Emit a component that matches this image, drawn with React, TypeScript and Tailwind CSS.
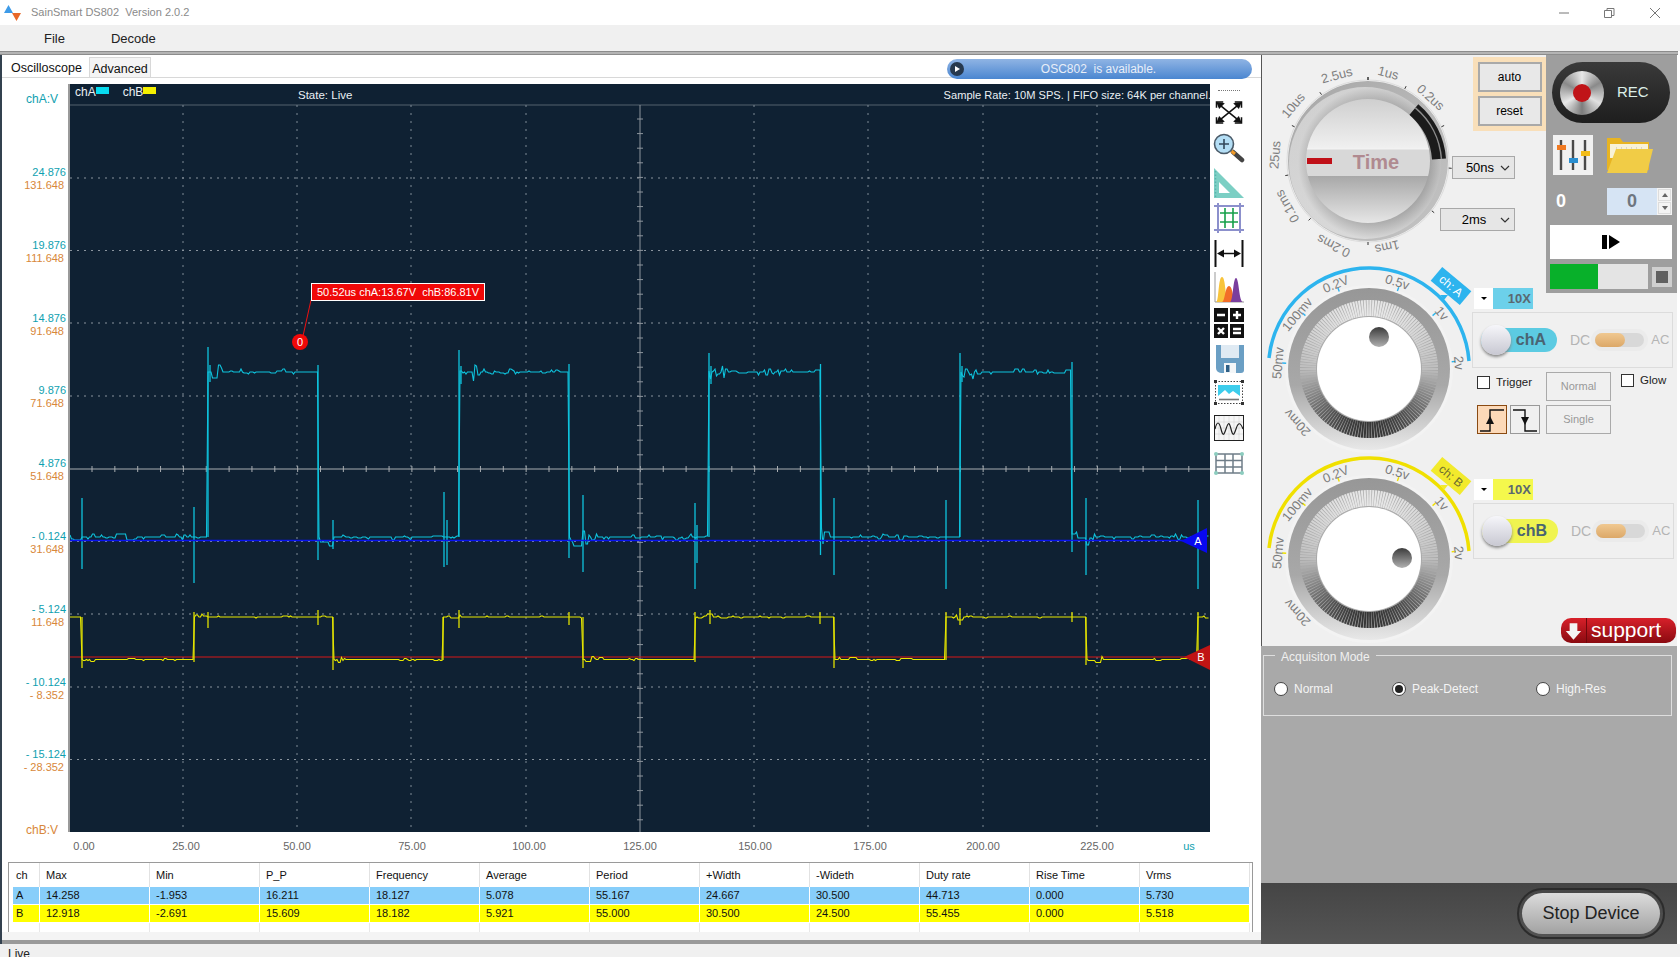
import React from "react";

// --- waveform data -------------------------------------------------------
function rng(seed: number) {
  let s = seed;
  return () => {
    s = (s * 16807) % 2147483647;
    return s / 2147483647;
  };
}

const GRID_X = [183, 297, 411, 526, 754, 868, 983, 1097];
const GRID_Y = [178, 250.5, 323, 396, 541.5, 614, 687, 759.5];

function levelPath(rises: number[], falls: number[], lo: number, hi: number, seed: number, amp: number, busy: number) {
  const r = rng(seed);
  const startHigh = Math.min(...falls) < Math.min(...rises);
  const isHigh = (x: number) => {
    const rise = Math.max(-1, ...rises.filter((e) => e <= x));
    const fall = Math.max(-1, ...falls.filter((e) => e <= x));
    if (rise < 0 && fall < 0) return startHigh;
    return rise > fall;
  };
  const edges = [...rises, ...falls];
  let d = "";
  let last = 0;
  for (let x = 70; x <= 1209; x += 1.5) {
    const base = isHigh(x) ? hi : lo;
    const near = edges.some((e) => x > e && x - e < 18);
    const p = near ? 0.8 : busy;
    if (r() < 0.5) last = r() < p ? Math.round((r() - 0.5) * (near ? amp * 3 : amp)) : 0;
    d += `${d ? "L" : "M"}${x.toFixed(1)} ${(base + last).toFixed(1)} `;
  }
  return d;
}

const A_RISE = [208, 459, 709, 960];
const A_FALL = [318, 569, 820.5, 1072];
const A_SPIKES = [
  [82, 498, 569], [194, 507, 583], [208, 347, 537], [318, 365, 560], [333, 520, 549], [444, 492, 567], [447, 520, 565],
  [459, 350, 537], [569, 364, 558], [583, 495, 572], [695, 503, 589], [697, 525, 563], [709, 353, 537], [820.5, 364, 555],
  [834, 498, 575], [946, 500, 589], [960, 353, 537], [1072, 362, 552], [1086, 498, 575], [1198, 500, 589],
  [210, 365, 382], [461, 366, 384], [711, 366, 384], [962, 366, 382],
];
const B_RISE = [194, 443, 695, 946, 1198];
const B_FALL = [82, 333, 583, 834, 1086];
const B_SPIKES = [
  [82, 617, 668], [194, 612, 662], [208, 612, 628], [318, 610, 625], [333, 617, 670], [443, 617, 660], [459, 610, 628],
  [569, 612, 625], [583, 617, 668], [695, 612, 662], [710, 610, 624], [820, 612, 624], [834, 617, 668], [946, 612, 660],
  [960, 608, 625], [1072, 612, 622], [1086, 617, 665], [1198, 612, 660],
];

const WAVE_A = levelPath(A_RISE, A_FALL, 537, 372, 77, 6, 0.5);
const WAVE_B = levelPath(B_RISE, B_FALL, 659.5, 617, 91, 2, 0.3);

function PlotLines() {
  const hTicks: number[] = [];
  for (let x = 92; x < 1209; x += 22.85) hTicks.push(x);
  const vTicks: number[] = [];
  for (let y = 119; y < 832; y += 14.6) vTicks.push(y);
  return (
    <svg viewBox="70 84 1140 748" className="block h-full w-full">
      <line x1="70" x2="1210" y1="105" y2="105" stroke="#55626f" strokeWidth="1" />
      {GRID_X.map((x) => (
        <line key={x} x1={x} x2={x} y1="105" y2="832" stroke="#7f8b96" strokeWidth="1" strokeDasharray="2 6" />
      ))}
      {GRID_Y.map((y) => (
        <line key={y} x1="70" x2="1210" y1={y} y2={y} stroke="#8a949e" strokeWidth="1" strokeDasharray="2 5" />
      ))}
      <line x1="70" x2="1210" y1="469" y2="469" stroke="#a9aeb2" strokeWidth="1" />
      {hTicks.map((x) => (
        <line key={x} x1={x} x2={x} y1="466" y2="472" stroke="#a9aeb2" strokeWidth="1" />
      ))}
      <line x1="640" x2="640" y1="105" y2="832" stroke="#8d959d" strokeWidth="1" />
      {vTicks.map((y) => (
        <line key={y} x1="637" x2="643" y1={y} y2={y} stroke="#8d959d" strokeWidth="1" />
      ))}
      <path d={WAVE_A} fill="none" stroke="#0ec4de" strokeWidth="1.1" />
      {A_SPIKES.map(([x, a, b]) => (
        <line key={`${x}-${a}`} x1={x} x2={x} y1={a} y2={b} stroke="#0ec4de" strokeWidth="1.3" />
      ))}
      <line x1="70" x2="1200" y1="540.5" y2="540.5" stroke="#0a14f0" strokeWidth="1.6" />
      <line x1="70" x2="1200" y1="657" y2="657" stroke="#d81818" strokeWidth="1" />
      <path d={WAVE_B} fill="none" stroke="#e8e800" strokeWidth="1.1" />
      {B_SPIKES.map(([x, a, b]) => (
        <line key={`${x}-${a}`} x1={x} x2={x} y1={a} y2={b} stroke="#e0e000" strokeWidth="1.3" />
      ))}
      <polygon points="1181,541 1207,528 1207,553" fill="#0808f0" />
      <text x="1198" y="545" fill="#fff" fontSize="11" fontFamily="Liberation Sans" textAnchor="middle">A</text>
      <polygon points="1184,657 1210,645 1210,670" fill="#c01414" />
      <text x="1201" y="661" fill="#fff" fontSize="11" fontFamily="Liberation Sans" textAnchor="middle">B</text>
      <line x1="311" x2="303" y1="300" y2="336" stroke="#f01010" strokeWidth="1" />
      <circle cx="300" cy="342" r="8" fill="#f00808" />
      <text x="300" y="346" fill="#fff" fontSize="11" fontFamily="Liberation Sans" textAnchor="middle">0</text>
    </svg>
  );
}

// --- toolbar icons -------------------------------------------------------
function IconFit() {
  return (
    <svg viewBox="0 0 30 26" className="mt-[9px] h-[25px] w-[30px]" fill="none" stroke="#111" strokeWidth="1.6">
      <path d="M2 8V2h7M21 2h7v6M2 18v6h7M21 24h7v-6" />
      <path d="M4 4l22 18M26 4L4 22" />
      <path d="M3 3l6 1-4 4zM27 3l-6 1 4 4zM3 23l6-1-4-4zM27 23l-6-1 4-4z" fill="#111" />
    </svg>
  );
}
function IconZoom() {
  return (
    <svg viewBox="0 0 32 30" className="mt-[8px] h-[30px] w-[32px]">
      <line x1="20" y1="19" x2="29" y2="27" stroke="#444" strokeWidth="4.5" strokeLinecap="round" />
      <line x1="18.5" y1="18" x2="22" y2="21" stroke="#f09a28" strokeWidth="3" />
      <circle cx="11" cy="11" r="9.5" fill="#b4def5" stroke="#4a5a68" strokeWidth="1.6" />
      <path d="M11 6v10M6 11h10" stroke="#33475a" strokeWidth="1.6" />
    </svg>
  );
}
function IconRuler() {
  return (
    <svg viewBox="0 0 30 30" className="mt-[5px] h-[30px] w-[30px]">
      <path fillRule="evenodd" d="M0 0L30 30H0zM5 14v11h11z" fill="#7ccfc4" />
      <path d="M1.5 3v26" stroke="#5ab3ad" strokeWidth="1.5" strokeDasharray="1.5 2" />
    </svg>
  );
}
function IconGrid() {
  return (
    <svg viewBox="0 0 30 30" className="mt-[5px] h-[30px] w-[30px]" fill="none">
      <path d="M4 0v30M26 0v30M0 3h30M0 27h30" stroke="#8c90cc" strokeWidth="2" />
      <path d="M6 10h18M6 19h18M11 5v20M19 5v20" stroke="#16a04a" strokeWidth="1.6" />
    </svg>
  );
}
function IconWidth() {
  return (
    <svg viewBox="0 0 30 27" className="mt-[7px] h-[27px] w-[30px]">
      <path d="M1.5 0v27M28.5 0v27" stroke="#111" strokeWidth="2" />
      <path d="M8 13.5h14" stroke="#111" strokeWidth="1.5" />
      <path d="M3 13.5l7-4v8zM27 13.5l-7-4v8z" fill="#111" />
    </svg>
  );
}
function IconPeaks() {
  return (
    <svg viewBox="0 0 30 31" className="mt-[5px] h-[31px] w-[30px]">
      <path d="M1 0v30h29" stroke="#999" strokeWidth="1" fill="none" />
      <path d="M2 30C5 30 4 5 8 5s3 25 7 25z" fill="#f8c43c" />
      <path d="M8 30c3 0 3-16 7-16s4 16 7 16z" fill="#f26d28" />
      <path d="M16 30c3 0 3-24 6-24s3 24 7 24z" fill="#7a3e9e" />
    </svg>
  );
}
function IconCalc() {
  return (
    <svg viewBox="0 0 30 30" className="mt-[5px] h-[30px] w-[30px]">
      <rect width="14" height="14" fill="#111" />
      <rect x="16" width="14" height="14" fill="#111" />
      <rect y="16" width="14" height="14" fill="#111" />
      <rect x="16" y="16" width="14" height="14" fill="#111" />
      <path d="M3 7h8M19 7h8M23 3v8M4 20l6 6M10 20l-6 6M19 21h8M19 25h8" stroke="#fff" strokeWidth="2.4" />
    </svg>
  );
}
function IconSave() {
  return (
    <svg viewBox="0 0 28 28" className="ml-[2px] mt-[7px] h-[28px] w-[28px]">
      <path d="M0 0h28v25a3 3 0 0 1-3 3H5a5 5 0 0 1-5-5z" fill="#6b9fc4" />
      <rect x="5" y="0" width="18" height="13" fill="#dfeaf3" />
      <rect x="8" y="18" width="12" height="10" fill="#f3f6f8" />
      <rect x="10" y="20" width="3.5" height="7" fill="#2e5f86" />
    </svg>
  );
}
function IconImage() {
  return (
    <svg viewBox="0 0 30 25" className="mt-[7px] h-[25px] w-[30px]">
      <rect x="1.5" y="1.5" width="27" height="22" fill="none" stroke="#444" strokeDasharray="1.5 1.5" />
      <rect x="0" y="0" width="3" height="3" fill="#333" />
      <rect x="27" y="0" width="3" height="3" fill="#333" />
      <rect x="0" y="22" width="3" height="3" fill="#333" />
      <rect x="27" y="22" width="3" height="3" fill="#333" />
      <path d="M4 5h22v11H4z" fill="#3dcdec" />
      <path d="M4 16l7-6 4 4 4-3 7 5z" fill="#fff" />
      <path d="M5 19.5h20" stroke="#777" strokeWidth="1.6" />
    </svg>
  );
}
function IconWave() {
  return (
    <svg viewBox="0 0 30 26" className="mt-[10px] h-[26px] w-[30px]">
      <rect x="0.5" y="0.5" width="29" height="25" fill="#f6f6f6" stroke="#222" />
      <path d="M5 1v24M10 1v24M15 1v24M20 1v24M25 1v24M1 7h28M1 13h28M1 19h28" stroke="#ccc" strokeWidth="0.5" />
      <path d="M1 14c2-8 4-8 6 0s3 6 5 0 3-8 5 0 3 6 5 0 4-8 7 0" stroke="#222" strokeWidth="1.2" fill="none" />
    </svg>
  );
}
function IconTable() {
  return (
    <svg viewBox="0 0 30 23" className="mt-[11px] h-[23px] w-[30px]" fill="none">
      <path d="M2 2h26v19H2zM2 8.5h26M2 15h26M11 2v19M19 2v19" stroke="#6f7d88" strokeWidth="1.5" />
      <g fill="#8ccdbf">
        <circle cx="2" cy="2" r="2" />
        <circle cx="28" cy="2" r="2" />
        <circle cx="2" cy="21" r="2" />
        <circle cx="28" cy="21" r="2" />
      </g>
    </svg>
  );
}

// --- dials ---------------------------------------------------------------
function TimeDial() {
  const labels: [string, number, number, number][] = [
    ["2.5us", -31, -85, -15], ["1us", 20, -87, 15], ["0.2us", 62, -63, 42], ["10us", -74, -55, -50],
    ["25us", -92, -6, -85], ["0.1ms", -80, 45, -120], ["0.2ms", -34, 84, 207], ["1ms", 19, 85, 167],
  ];
  const ticks = [-90, -63, -25, 5, 38, 90, 135, 170, 205, 235, 270];
  return (
    <svg viewBox="0 0 177 209" className="h-[209px] w-[177px] overflow-visible">
      <defs>
        <linearGradient id="tOuter" x1="0.1" y1="0" x2="0.9" y2="1">
          <stop offset="0" stopColor="#a8a8a8" />
          <stop offset="0.5" stopColor="#b8b8b8" />
          <stop offset="1" stopColor="#c2c2c2" />
        </linearGradient>
        <linearGradient id="tTop" x1="0" y1="0" x2="0" y2="1">
          <stop offset="0" stopColor="#cfcfcf" />
          <stop offset="1" stopColor="#f0f0f0" />
        </linearGradient>
        <linearGradient id="tBot" x1="0" y1="0" x2="0" y2="1">
          <stop offset="0" stopColor="#a8a8a8" />
          <stop offset="1" stopColor="#e6e6e6" />
        </linearGradient>
        <radialGradient id="tShade" cx="0.56" cy="0.5" r="0.5">
          <stop offset="0.72" stopColor="#8a8a8a" />
          <stop offset="1" stopColor="#efefef" />
        </radialGradient>
        <clipPath id="tKnob">
          <circle cx="106" cy="106" r="62" />
        </clipPath>
      </defs>
      <circle cx="106" cy="106" r="81" fill="#f4f4f4" stroke="#dcdcdc" />
      <circle cx="106" cy="106" r="80" fill="url(#tOuter)" />
      <circle cx="103" cy="108" r="76" fill="url(#tShade)" opacity="0.55" />
      <path d="M151.8 54.6A71 71 0 0 1 177 104" fill="none" stroke="#1b1b1b" strokeWidth="14" />
      <path d="M153.4 52.9A73.5 73.5 0 0 1 179.4 104" fill="none" stroke="#8c8c8c" strokeWidth="1.5" />
      <g clipPath="url(#tKnob)">
        <rect x="44" y="44" width="124" height="49" fill="url(#tTop)" />
        <rect x="44" y="93" width="124" height="28" fill="#d8d8d8" />
        <rect x="44" y="93" width="124" height="1.5" fill="#f2f2f2" />
        <rect x="44" y="121" width="124" height="47" fill="url(#tBot)" />
      </g>
      <rect x="45" y="103" width="25" height="6" fill="#c01018" />
      <text x="114" y="114" fontSize="20" fontWeight="700" fill="#b08a90" textAnchor="middle" fontFamily="Liberation Sans">Time</text>
      {ticks.map((a) => {
        const r = (a * Math.PI) / 180;
        return (
          <line key={a} x1={106 + 81 * Math.cos(r)} y1={106 + 81 * Math.sin(r)} x2={106 + 84 * Math.cos(r)} y2={106 + 84 * Math.sin(r)} stroke="#333" strokeWidth="1" />
        );
      })}
      {labels.map(([t, x, y, rot]) => (
        <text key={t} x="0" y="0" transform={`translate(${106 + x} ${106 + y}) rotate(${rot})`} fontSize="13" fill="#7f7f7f" textAnchor="middle" dominantBaseline="middle" fontFamily="Liberation Sans">
          {t}
        </text>
      ))}
    </svg>
  );
}

function VoltDial({ id, color, tag, tagText, dotX, dotY }: { id: string; color: string; tag: string; tagText: string; dotX: number; dotY: number }) {
  const cx = 107;
  const cy = 105;
  const labels: [string, number, number, number][] = [
    ["50mv", -90, -6, -85], ["100mv", -71, -54, -50], ["0.2V", -33, -84, -22], ["0.5v", 28, -86, 17],
    ["1v", 72, -55, 50], ["2v", 89, -6, 85], ["20mv", -71, 53, -133],
  ];
  const ribs = Array.from({ length: 150 }, (_, i) => {
    const a = (i / 150) * Math.PI * 2;
    const s = Math.sin(a); // +1 at the bottom
    const v = s > 0 ? Math.round(190 - 135 * s) : Math.round(190 + 40 * -s);
    return { a, c: `rgb(${v},${v},${v})` };
  });
  return (
    <svg viewBox="0 0 210 190" className="h-[190px] w-[210px] overflow-visible">
      <defs>
        <linearGradient id={`${id}ring`} x1="0" y1="0" x2="0" y2="1">
          <stop offset="0" stopColor="#979797" />
          <stop offset="0.6" stopColor="#a8a8a8" />
          <stop offset="1" stopColor="#e8e8e8" />
        </linearGradient>
        <linearGradient id={`${id}dot`} x1="0" y1="0" x2="0" y2="1">
          <stop offset="0" stopColor="#3c3c3c" />
          <stop offset="1" stopColor="#b0b0b0" />
        </linearGradient>
      </defs>
      <path d={`M${cx - 100} ${cy - 11}A100.4 100.4 0 0 1 ${cx + 100} ${cy - 8}`} fill="none" stroke={color} strokeWidth="3.5" />
      <circle cx={cx} cy={cy} r="84" fill="#f3f3f3" />
      <circle cx={cx} cy={cy} r="81" fill={`url(#${id}ring)`} />
      <circle cx={cx} cy={cy} r="69" fill="#aaa" />
      {ribs.map((r, i) => (
        <line key={i} x1={cx + 53 * Math.cos(r.a)} y1={cy + 53 * Math.sin(r.a)} x2={cx + 69 * Math.cos(r.a)} y2={cy + 69 * Math.sin(r.a)} stroke={r.c} strokeWidth="2" />
      ))}
      <circle cx={cx} cy={cy} r="52" fill="#fff" />
      <circle cx={dotX} cy={dotY} r="10" fill={`url(#${id}dot)`} />
      {[-176, -140, -111, -70, -40, -5].map((a) => {
        const r = (a * Math.PI) / 180;
        return (
          <line key={a} x1={cx + 83 * Math.cos(r)} y1={cy + 83 * Math.sin(r)} x2={cx + 87 * Math.cos(r)} y2={cy + 87 * Math.sin(r)} stroke={color} strokeWidth="1.4" />
        );
      })}
      {labels.map(([t, x, y, rot]) => (
        <text key={t} transform={`translate(${cx + x} ${cy + y}) rotate(${rot})`} fontSize="13" fill="#7d7d7d" textAnchor="middle" dominantBaseline="middle" fontFamily="Liberation Sans">
          {t}
        </text>
      ))}
      <g transform={`translate(189 22) rotate(40)`}>
        <rect x="-19" y="-9" width="38" height="18" fill={tag} />
        <text x="0" y="4" fontSize="12" fill={tagText} textAnchor="middle" fontFamily="Liberation Sans">{id === "a" ? "ch: A" : "ch: B"}</text>
      </g>
      <polygon points="178,31 186,31 182,36" fill={tag} />
    </svg>
  );
}

// --- small controls ------------------------------------------------------
function DropValue({ value, width }: { value: string; width: string }) {
  return (
    <div className={`flex h-[23px] items-center justify-between border border-[#a8a8a8] bg-[#e6e6e6] pl-[7px] pr-[4px] text-[13px] text-black ${width}`}>
      <span className="mx-auto">{value}</span>
      <svg viewBox="0 0 10 6" className="h-[6px] w-[10px]" fill="none" stroke="#333" strokeWidth="1.2">
        <path d="M1 1l4 4 4-4" />
      </svg>
    </div>
  );
}

function ProbeSelect({ bg }: { bg: string }) {
  return (
    <div className="ml-[2px] flex h-[21px] w-[59px] text-[13px] font-bold text-[#5a6870]">
      <div className="flex w-[19px] items-center justify-center bg-white">
        <span className="border-x-[3px] border-t-[3px] border-x-transparent border-t-black" />
      </div>
      <div className={`flex w-[40px] items-center justify-end pr-[2px] ${bg}`}>10X</div>
    </div>
  );
}

function ChannelBox({ name, pill, indent }: { name: string; pill: string; indent: string }) {
  return (
    <div className={`flex h-[56px] w-[201px] items-center border border-[#dcdcdc] ${indent}`}>
      <div className={`relative ml-[8px] flex h-[24px] w-[76px] items-center justify-end rounded-full pr-[11px] text-[16px] font-bold text-[#4a6472] ${pill}`}>
        {name}
        <span className="absolute left-0 top-[-3px] h-[30px] w-[30px] rounded-full bg-gradient-to-b from-[#f6f6fa] to-[#c8c8d2] shadow-[0_2px_3px_#888]" />
      </div>
      <span className="ml-[13px] text-[14px] text-[#b4b4b4]">DC</span>
      <div className="ml-[5px] flex h-[14px] w-[49px] items-center rounded-full bg-[#d8d8d8] shadow-[0_0_0_4px_#ebebeb]">
        <span className="h-[14px] w-[30px] rounded-full bg-gradient-to-b from-[#f0c890] to-[#dca868]" />
      </div>
      <span className="ml-[7px] text-[13px] text-[#b4b4b4]">AC</span>
    </div>
  );
}

function Radio({ label, on, width }: { label: string; on?: boolean; width: string }) {
  return (
    <div className={`flex items-center gap-[6px] text-[12px] text-[#f4f4f4] ${width}`}>
      <span className="flex h-[14px] w-[14px] items-center justify-center rounded-full border border-[#444] bg-white">
        {on && <span className="h-[8px] w-[8px] rounded-full bg-[#222]" />}
      </span>
      {label}
    </div>
  );
}

function Checkbox({ label }: { label: string }) {
  return (
    <div className="flex items-center gap-[6px] text-[11.5px] text-[#222]">
      <span className="h-[13px] w-[13px] border border-[#333] bg-white" />
      {label}
    </div>
  );
}

function EdgeButton({ active, d, arrow }: { active?: boolean; d: string; arrow: string }) {
  return (
    <div className={`flex h-[29px] w-[30px] items-center justify-center border ${active ? "border-[#8a4a12] bg-[#fcd9b8]" : "border-[#999] bg-[#f0f0f0]"}`}>
      <svg viewBox="0 0 28 27" className="h-[27px] w-[28px]" fill="none">
        <path d={d} stroke="#111" strokeWidth="1.4" />
        <path d={arrow} fill="#111" />
      </svg>
    </div>
  );
}

const X_LABELS: [string, string][] = [
  ["0.00", "w-[102px]"], ["25.00", "w-[102px]"], ["50.00", "w-[120px]"], ["75.00", "w-[110px]"], ["100.00", "w-[124px]"],
  ["125.00", "w-[98px]"], ["150.00", "w-[132px]"], ["175.00", "w-[98px]"], ["200.00", "w-[128px]"], ["225.00", "w-[100px]"],
];

const Y_LABELS = [
  ["24.876", "131.648"], ["19.876", "111.648"], ["14.876", "91.648"], ["9.876", "71.648"], ["4.876", "51.648"],
  ["- 0.124", "31.648"], ["- 5.124", "11.648"], ["- 10.124", "- 8.352"], ["- 15.124", "- 28.352"],
];

const COLS = ["Max", "Min", "P_P", "Frequency", "Average", "Period", "+Width", "-Wideth", "Duty rate", "Rise Time", "Vrms"];
const ROW_A = ["14.258", "-1.953", "16.211", "18.127", "5.078", "55.167", "24.667", "30.500", "44.713", "0.000", "5.730"];
const ROW_B = ["12.918", "-2.691", "15.609", "18.182", "5.921", "55.000", "30.500", "24.500", "55.455", "0.000", "5.518"];
const TRACKS = "grid grid-cols-[27px_repeat(11,110px)]";

function DataRow({ ch, values, bg }: { ch: string; values: string[]; bg: string }) {
  return (
    <div className={`${TRACKS} mb-px h-[17px] items-center text-[11px] leading-[17px] text-[#111]`}>
      <div className={`h-full border-r border-white pl-[3px] ${bg}`}>{ch}</div>
      {values.map((v, i) => (
        <div key={i} className={`h-full border-r border-white pl-[6px] ${bg}`}>{v}</div>
      ))}
    </div>
  );
}

export default function App() {
  return (
    <div className="flex h-[957px] w-[1680px] flex-col overflow-hidden bg-white [font-family:'Liberation_Sans',Arial,sans-serif]">
      {/* title bar */}
      <div className="flex h-[25px] shrink-0 items-center bg-white">
        <svg viewBox="0 0 18 16" className="ml-[4px] h-[16px] w-[18px]">
          <path d="M0 8L4.5 0 9 8z" fill="#3e9be8" />
          <path d="M8 8h9l-4.5 8z" fill="#e8682a" />
        </svg>
        <span className="mb-[1px] ml-[9px] whitespace-pre text-[11px] text-[#8a8a8a]">SainSmart DS802  Version 2.0.2</span>
        <svg viewBox="0 0 102 12" className="ml-auto mr-[19px] h-[12px] w-[102px]" fill="none" stroke="#777" strokeWidth="1">
          <path d="M0 6h10M45.5 3.5h7v7h-7zM48 3.5V1.5h7v7h-2.5M91 1l10 10M101 1L91 11" />
        </svg>
      </div>

      {/* menu */}
      <div className="flex h-[26px] shrink-0 items-center bg-[#f0f0f0] pt-[1px] text-[13px] text-[#222]">
        <span className="ml-[44px]">File</span>
        <span className="ml-[46px]">Decode</span>
      </div>
      <div className="h-[4px] w-[1678px] shrink-0 border-y border-[#8c8c8c] bg-[#b4b4b4]" />

      {/* main area */}
      <div className="flex h-[889px] shrink-0">
        {/* scope side */}
        <div className="flex w-[1261px] flex-col border-l-[2px] border-[#33414f] bg-white">
          <div className="flex h-[23px] items-end border-b border-[#d8d8d8] pl-[2px]">
            <div className="flex h-[21px] w-[85px] items-center justify-center pt-[3px] text-[12.5px] text-[#111]">Oscilloscope</div>
            <div className="flex h-[20px] w-[62px] items-center justify-center border border-b-0 border-[#d8d8d8] bg-[#f4f4f4] pt-[4px] text-[12.5px] text-[#111]">Advanced</div>
            <div className="relative mb-[-2px] ml-[796px] flex h-[20px] w-[305px] items-center justify-center rounded-full bg-gradient-to-b from-[#8fb4e4] to-[#4a86d0] text-[12px] text-[#e8eef8]">
              <span className="absolute left-[3px] top-[3px] flex h-[14px] w-[14px] items-center justify-center rounded-full bg-[#27394e]">
                <span className="ml-[1px] border-y-[3px] border-l-[5px] border-y-transparent border-l-white" />
              </span>
              <span className="mr-[2px] whitespace-pre">OSC802  is available.</span>
            </div>
          </div>

          <div className="flex h-[754px] pt-[6px]">
            {/* y axis */}
            <div className="flex w-[68px] flex-col items-end border-r-[2px] border-[#9a9a9a] pr-[2px] text-[11px]">
              <div className="h-[82px] w-full shrink-0 pl-[24px] pt-[6px] text-[12px] text-[#0f9fb0]">chA:V</div>
              {Y_LABELS.map(([a, b]) => (
                <div key={a} className="h-[72.8px] shrink-0 text-right leading-[13px]">
                  <div className="text-[#0f9fb0]">{a}</div>
                  <div className="pr-[2px] text-[#d8873a]">{b}</div>
                </div>
              ))}
              <div className="w-full pl-[24px] text-[12px] text-[#d8873a]">chB:V</div>
            </div>

            {/* plot */}
            <div className="relative h-[748px] w-[1140px] overflow-hidden bg-[#0f2133]">
              <PlotLines />
              <div className="absolute left-[5px] top-[1px] flex items-center text-[12px] leading-[14px] text-[#eaf0f4]">
                chA<span className="mb-[3px] h-[7px] w-[13px] bg-[#08dcf0]" />
                <span className="ml-[14px]">chB</span>
                <span className="mb-[3px] h-[7px] w-[13px] bg-[#f4f000]" />
              </div>
              <div className="absolute left-[228px] top-[3px] text-[11.5px] text-[#eaf0f4]">State: Live</div>
              <div className="absolute right-[-1px] top-[3px] whitespace-nowrap text-[11.1px] text-[#eaf0f4]">Sample Rate: 10M SPS. | FIFO size: 64K per channel.</div>
              <div className="absolute left-[241px] top-[199px] flex h-[18px] w-[174px] items-center justify-center whitespace-pre border border-white bg-[#f00808] text-[11px] text-white">50.52us chA:13.67V  chB:86.81V</div>
            </div>

            {/* toolbar */}
            <div className="flex w-[45px] flex-col items-center pr-[7px]">
              <div className="mt-[6px] w-[22px] border-t border-dotted border-[#777]" />
              <IconFit />
              <IconZoom />
              <IconRuler />
              <IconGrid />
              <IconWidth />
              <IconPeaks />
              <IconCalc />
              <IconSave />
              <IconImage />
              <IconWave />
              <IconTable />
            </div>
          </div>

          {/* x axis */}
          <div className="flex h-[30px] items-center pb-[2px] pl-[31px] text-[11px] text-[#666]">
            {X_LABELS.map(([t, w]) => (
              <div key={t} className={`text-center ${w}`}>{t}</div>
            ))}
            <div className="w-[84px] text-center text-[#0f9fb0]">us</div>
          </div>

          {/* measurements */}
          <div className="ml-[6px] h-[70px] w-[1245px] border border-b-0 border-[#9a9a9a] pl-[4px]">
            <div className={`${TRACKS} h-[24px] items-center text-[11px] text-[#111]`}>
              <div className="flex h-full items-center border-r border-[#e2e2e2] pl-[3px]">ch</div>
              {COLS.map((c) => (
                <div key={c} className="flex h-full items-center border-r border-[#e2e2e2] pl-[6px]">{c}</div>
              ))}
            </div>
            <DataRow ch="A" values={ROW_A} bg="bg-[#87cefa]" />
            <DataRow ch="B" values={ROW_B} bg="bg-[#ffff00]" />
            <div className={`${TRACKS} h-[10px]`}>
              {Array.from({ length: 12 }).map((_, i) => (
                <div key={i} className="border-r border-[#e8e8e8]" />
              ))}
            </div>
          </div>
          <div className="mt-auto h-[12px] border-b-[4px] border-[#9a9a9a] bg-[#f4f4f4]" />
        </div>

        {/* control side */}
        <div className="flex w-[416px] flex-col">
          <div className="grid h-[591px] grid-cols-[210px_74px_131px] grid-rows-[209px_29px_161px_192px] border-l border-[#555] bg-[#f0f0f0]">
            {/* time dial and buttons */}
            <div className="col-span-2 flex">
              <TimeDial />
              <div className="flex flex-1 flex-col items-end pt-[2px]">
                <div className="flex w-[73px] flex-col items-center gap-[4px] bg-[#f9dfb9] py-[5px]">
                  <div className="flex h-[30px] w-[64px] items-center justify-center border-2 border-[#a9a9a9] bg-[#e8e8e8] text-[12px] text-black">auto</div>
                  <div className="flex h-[30px] w-[64px] items-center justify-center border-2 border-[#a9a9a9] bg-[#e8e8e8] text-[12px] text-black">reset</div>
                </div>
                <div className="mr-[31px] mt-[25px]">
                  <DropValue value="50ns" width="w-[63px]" />
                </div>
                <div className="mr-[31px] mt-[29px]">
                  <DropValue value="2ms" width="w-[75px]" />
                </div>
              </div>
            </div>

            {/* record panel */}
            <div className="col-start-3 row-span-2 row-start-1 flex flex-col bg-[#9e9e9e] pl-[4px]">
              <div className="ml-[2px] mt-[7px] flex h-[61px] w-[118px] items-center rounded-full bg-gradient-to-b from-[#3a3a3a] to-[#1e1e1e]">
                <div className="ml-[8px] flex h-[44px] w-[44px] items-center justify-center rounded-full bg-[conic-gradient(#e8e8e8,#8a8a8a,#e0e0e0,#7c7c7c,#e8e8e8,#8a8a8a,#e8e8e8)]">
                  <span className="h-[18px] w-[18px] rounded-full bg-[#c01418]" />
                </div>
                <span className="ml-[13px] text-[15px] text-[#dcefe8]">REC</span>
              </div>
              <div className="mt-[12px] flex items-start">
                <svg viewBox="0 0 40 40" className="ml-[3px] h-[40px] w-[40px] bg-[#f1f1f1]">
                  <path d="M8 5v30M20 5v30M32 5v30" stroke="#4a4a4a" strokeWidth="2.4" />
                  <rect x="4" y="10" width="9" height="5" fill="#f07a22" />
                  <rect x="16" y="23" width="9" height="5" fill="#2a8ed0" />
                  <rect x="28" y="16" width="9" height="5" fill="#f2bc1a" />
                </svg>
                <svg viewBox="0 0 46 38" className="ml-[14px] h-[38px] w-[46px]">
                  <path d="M0 3h13l3 4h26v28H0z" fill="#e8b422" />
                  <path d="M3 9h38v14H3z" fill="#f8f2d8" />
                  <path d="M9 13h28" stroke="#bbb" strokeDasharray="1 4" />
                  <path d="M9 14h37l-6 24H0z" fill="#f1cc46" />
                </svg>
              </div>
              <div className="mt-[13px] flex h-[27px] items-center">
                <span className="ml-[6px] w-[51px] text-[18px] font-bold text-white">0</span>
                <div className="flex h-[27px] w-[65px] bg-[#d6e4f4]">
                  <span className="flex-1 text-center text-[18px] font-bold leading-[27px] text-[#6e7680]">0</span>
                  <div className="flex w-[15px] flex-col gap-px bg-[#f4f4f4] p-px">
                    <span className="flex flex-1 items-center justify-center border border-[#ddd]">
                      <span className="border-x-[3px] border-b-[4px] border-x-transparent border-b-[#666]" />
                    </span>
                    <span className="flex flex-1 items-center justify-center border border-[#ddd]">
                      <span className="border-x-[3px] border-t-[4px] border-x-transparent border-t-[#666]" />
                    </span>
                  </div>
                </div>
              </div>
              <div className="mt-[10px] flex h-[34px] w-[122px] items-center justify-center bg-white">
                <span className="h-[14px] w-[5px] bg-black" />
                <span className="ml-[2px] border-y-[7px] border-l-[11px] border-y-transparent border-l-black" />
              </div>
              <div className="mt-[5px] flex h-[25px] items-center gap-[4px]">
                <div className="h-[25px] w-[98px] bg-[#e4e4e4]">
                  <div className="h-full w-[48px] bg-[#08b02a]" />
                </div>
                <div className="flex h-[20px] w-[20px] items-center justify-center bg-[#cfcfcf]">
                  <span className="h-[12px] w-[12px] bg-[#606060]" />
                </div>
              </div>
            </div>

            {/* channel A */}
            <div className="row-span-2 row-start-2">
              <VoltDial id="a" color="#2db4ee" tag="#2db4ee" tagText="#fff" dotX={117} dotY={73} />
            </div>
            <div className="col-span-2 col-start-2 row-start-3 -mt-[5px] flex flex-col">
              <ProbeSelect bg="bg-[#6cd0ea]" />
              <div className="mt-[3px]">
                <ChannelBox name="chA" pill="bg-[#5ccbe2]" indent="" />
              </div>
              <div className="mt-[4px] flex">
                <div className="flex w-[74px] flex-col pl-[5px]">
                  <div className="h-[33px] pt-[2px]">
                    <Checkbox label="Trigger" />
                  </div>
                  <div className="flex gap-[3px]">
                    <EdgeButton active d="M2 25h10V4h14" arrow="M12 10l4 8H8z" />
                    <EdgeButton d="M2 4h12v21h12" arrow="M14 19l-4-8h8z" />
                  </div>
                </div>
                <div className="flex w-[65px] flex-col gap-[4px] text-[11px] text-[#999]">
                  <div className="flex h-[29px] items-center justify-center border border-[#aaa]">Normal</div>
                  <div className="flex h-[29px] items-center justify-center border border-[#aaa]">Single</div>
                </div>
                <div className="pl-[10px]">
                  <Checkbox label="Glow" />
                </div>
              </div>
            </div>

            {/* channel B */}
            <div className="row-start-4">
              <VoltDial id="b" color="#f0e000" tag="#f2ea2c" tagText="#6c6c30" dotX={140} dotY={104} />
            </div>
            <div className="col-span-2 col-start-2 row-start-4 flex flex-col pb-[3px] pt-[25px]">
              <ProbeSelect bg="bg-[#f4f84c]" />
              <div className="mt-[3px]">
                <ChannelBox name="chB" pill="bg-[#f0f450]" indent="ml-[1px]" />
              </div>
              <div className="mr-[1px] mt-auto flex h-[25px] w-[115px] items-center self-end rounded-[10px] bg-gradient-to-b from-[#d8202a] to-[#8a0a10] text-[21px] leading-none text-white">
                <svg viewBox="0 0 26 25" className="h-[25px] w-[26px] border-r border-[#70080c]">
                  <path d="M9 5h8v8h4l-8 9-8-9h4z" fill="#f4f4f4" />
                </svg>
                <span className="ml-[4px] pb-[3px]">support</span>
              </div>
            </div>
          </div>

          {/* acquisition */}
          <div className="h-[237px] bg-[#a9a9a9] pl-[2px] pr-[5px] pt-[9px]">
            <div className="relative flex h-[61px] items-center border border-[#dedede] pl-[10px] pt-[7px]">
              <span className="absolute left-[11px] top-[-8px] bg-[#a9a9a9] px-[6px] text-[12px] text-[#f0f0f0]">Acquisiton Mode</span>
              <Radio label="Normal" width="w-[118px]" />
              <Radio label="Peak-Detect" on width="w-[144px]" />
              <Radio label="High-Res" width="w-[100px]" />
            </div>
          </div>
          <div className="flex h-[61px] items-center justify-end bg-gradient-to-b from-[#454545] to-[#555] pr-[12px]">
            <div className="flex h-[51px] w-[148px] items-center justify-center rounded-full border-2 border-[#2c2c2c] p-[3px]">
              <div className="flex h-full w-full items-center justify-center rounded-full bg-gradient-to-b from-[#dcdcdc] to-[#a2a2a2] text-[18px] text-[#222]">Stop Device</div>
            </div>
          </div>
        </div>
      </div>

      {/* status */}
      <div className="flex-1 bg-[#f0f0f0] pl-[8px] text-[12px] leading-[20px] text-[#222]">Live</div>
    </div>
  );
}
